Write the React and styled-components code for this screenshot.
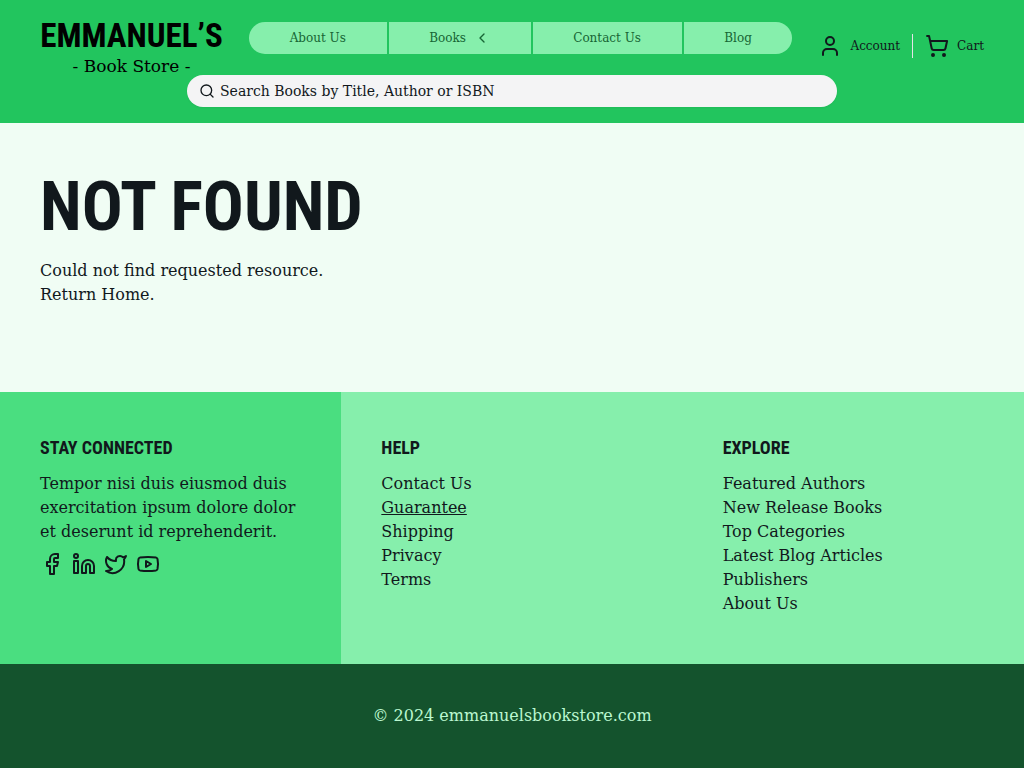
import React from 'react';
import styled, { createGlobalStyle } from 'styled-components';
import {
  ChevronLeft, Facebook, Linkedin, Search, ShoppingCart, Twitter, User, Youtube,
} from 'lucide-react';

const serif = '"DejaVu Serif", "Liberation Serif", serif';
const display = '"Roboto Condensed", "Liberation Sans Narrow", "Liberation Sans", sans-serif';

const GlobalStyle = createGlobalStyle`
  *, *::before, *::after { box-sizing: border-box; }
  body { margin: 0; background: #f0fdf4; color: #11181c; font: 16px/24px ${serif}; }
  h1, h2, p, ul { margin: 0; padding: 0; }
  ul { list-style: none; }
  a { color: inherit; text-decoration: none; }
  svg { display: block; flex: none; }
`;

const Page = styled.div`
  min-height: 100vh;
  display: flex;
  flex-direction: column;
`;

const Header = styled.header`
  display: flex;
  flex-direction: column;
  align-items: center;
  padding: 16px 40px;
  background: #22c55e;
`;

const TopRow = styled.div`
  width: 100%;
  height: 59px;
  display: flex;
  align-items: center;
  justify-content: space-between;
  gap: 26px;
`;

const Logo = styled.a`
  width: 183px;
  display: flex;
  flex-direction: column;
  align-items: center;
  color: #000;
  white-space: nowrap;
`;

const LogoName = styled.span`
  font: bold 33px/40px ${display};
`;

const LogoTag = styled.span`
  font-size: 17px;
  line-height: 20px;
`;

const Nav = styled.nav`
  flex: 1;
  align-self: flex-start;
  display: flex;
  gap: 2px;
  margin-top: 6px;
  border-radius: 16px;
  overflow: hidden;
`;

const NavItem = styled.a`
  flex: 1 0 auto;
  height: 32px;
  display: flex;
  align-items: center;
  justify-content: center;
  gap: 8px;
  padding: 0 40px;
  background: #86efac;
  color: #166534;
  font-size: 12px;
  white-space: nowrap;
`;

const UserLinks = styled.div`
  display: flex;
  align-items: center;
`;

const UserLink = styled.a`
  display: flex;
  align-items: center;
  gap: 8px;
  font-size: 12px;

  & + & {
    margin-left: 12px;
    padding-left: 12px;
    border-left: 1px solid #e4e4e7;
  }
`;

const SearchBox = styled.label`
  width: 100%;
  max-width: 650px;
  height: 32px;
  display: flex;
  align-items: center;
  gap: 5px;
  padding: 0 12px;
  border-radius: 16px;
  background: #f4f4f5;
  box-shadow: 0 1px 2px rgba(0, 0, 0, 0.05);
`;

const SearchInput = styled.input`
  flex: 1;
  min-width: 0;
  padding: 0;
  border: 0;
  outline: 0;
  background: transparent;
  color: #11181c;
  font: 14px/24px ${serif};

  &::placeholder { color: #11181c; opacity: 1; }
`;

const Main = styled.main`
  flex: 1;
  padding: 40px;
`;

const Title = styled.h1`
  margin-bottom: 8px;
  font: bold 68px/88px ${display};
  white-space: nowrap;
`;

const Footer = styled.footer`
  display: grid;
  grid-template-columns: repeat(3, 1fr);
  background: #86efac;
`;

const Column = styled.section`
  padding: 40px 40px 48px;
  background: ${(p) => (p.$accent ? '#4ade80' : 'transparent')};
`;

const ColumnTitle = styled.h2`
  margin-bottom: 8px;
  font: bold 18px/32px ${display};
`;

const FooterLink = styled.a`
  text-decoration: ${(p) => (p.$underlined ? 'underline' : 'none')};
`;

const Socials = styled.div`
  display: flex;
  gap: 8px;
  margin-top: 8px;
`;

const Copyright = styled.div`
  padding: 40px;
  background: #14532d;
  color: #bbf7d0;
  text-align: center;
`;

const navItems = ['About Us', 'Books', 'Contact Us', 'Blog'];
const helpLinks = ['Contact Us', 'Guarantee', 'Shipping', 'Privacy', 'Terms'];
const exploreLinks = [
  'Featured Authors', 'New Release Books', 'Top Categories',
  'Latest Blog Articles', 'Publishers', 'About Us',
];
const socials = [
  ['Facebook', Facebook], ['LinkedIn', Linkedin], ['Twitter', Twitter], ['YouTube', Youtube],
];

function LinkColumn({ title, links }) {
  return (
    <Column>
      <ColumnTitle>{title}</ColumnTitle>
      <ul>
        {links.map((text) => (
          <li key={text}>
            <FooterLink href="#" $underlined={text === 'Guarantee'}>{text}</FooterLink>
          </li>
        ))}
      </ul>
    </Column>
  );
}

export default function App() {
  return (
    <Page>
      <GlobalStyle />
      <Header>
        <TopRow>
          <Logo href="#">
            <LogoName>EMMANUEL’S</LogoName>
            <LogoTag>- Book Store -</LogoTag>
          </Logo>
          <Nav>
            {navItems.map((text) => (
              <NavItem href="#" key={text}>
                {text}
                {text === 'Books' && <ChevronLeft size={16} />}
              </NavItem>
            ))}
          </Nav>
          <UserLinks>
            <UserLink href="#"><User size={24} />Account</UserLink>
            <UserLink href="#"><ShoppingCart size={24} />Cart</UserLink>
          </UserLinks>
        </TopRow>
        <SearchBox>
          <Search size={16} />
          <SearchInput
            type="search"
            aria-label="Search books"
            placeholder="Search Books by Title, Author or ISBN"
          />
        </SearchBox>
      </Header>
      <Main>
        <Title>NOT FOUND</Title>
        <p>Could not find requested resource.</p>
        <a href="#">Return Home.</a>
      </Main>
      <Footer>
        <Column $accent>
          <ColumnTitle>STAY CONNECTED</ColumnTitle>
          <p>Tempor nisi duis eiusmod duis exercitation ipsum dolore dolor et deserunt id reprehenderit.</p>
          <Socials>
            {socials.map(([name, Icon]) => (
              <a href="#" key={name} aria-label={name}><Icon size={24} /></a>
            ))}
          </Socials>
        </Column>
        <LinkColumn title="HELP" links={helpLinks} />
        <LinkColumn title="EXPLORE" links={exploreLinks} />
      </Footer>
      <Copyright>© 2024 emmanuelsbookstore.com</Copyright>
    </Page>
  );
}
